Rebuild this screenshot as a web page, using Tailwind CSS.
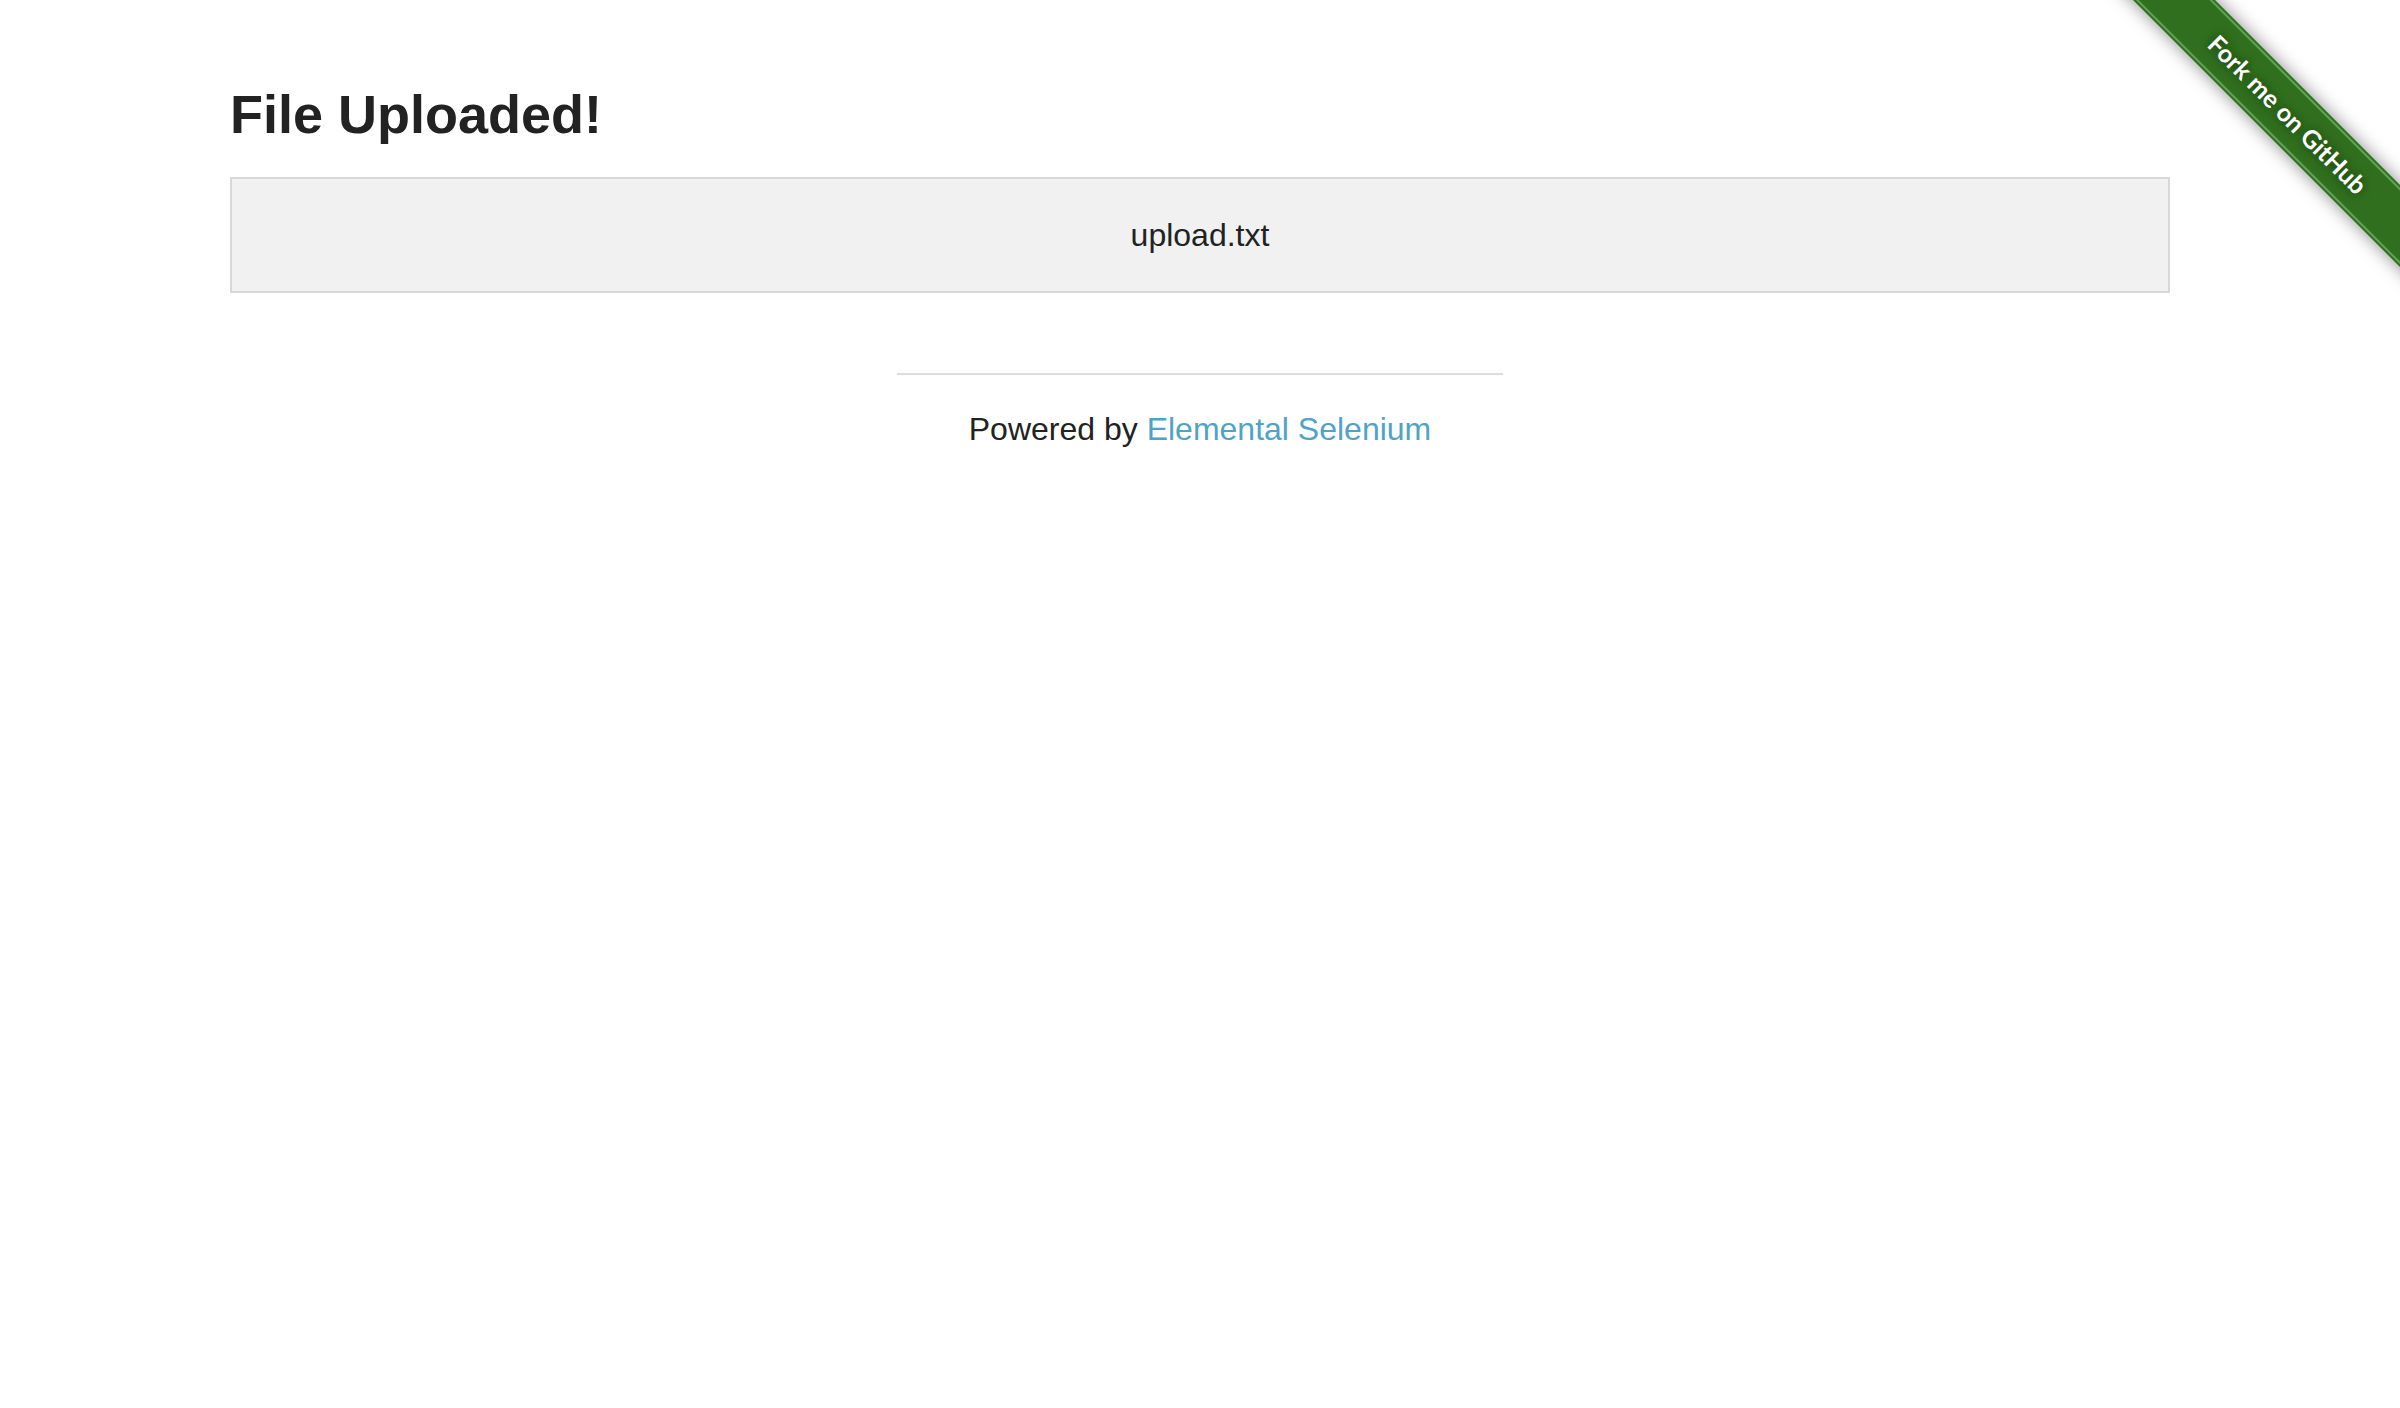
<!DOCTYPE html>
<html lang="en">
<head>
<meta charset="utf-8">
<title>The Internet</title>
<script src="https://cdn.jsdelivr.net/npm/@tailwindcss/browser@4"></script>
</head>
<body class="relative min-h-screen overflow-x-hidden bg-white font-['Liberation_Sans',Arial,sans-serif] text-[32px] leading-[32px] text-[#222222]">
<a href="https://github.com/tourdedave/the-internet" class="absolute top-0 right-0 block size-[300px] overflow-hidden">
  <span class="absolute top-[85px] right-[-138px] flex h-[58px] w-[500px] rotate-45 flex-col justify-center bg-[#2f6f1d] py-[2px] shadow-[0_0_18px_rgba(0,0,0,0.45)]">
    <span class="flex flex-1 items-center justify-center border-y-2 border-[#62a156] font-['Lato','Open_Sans',sans-serif] text-[25px] leading-[32px] font-bold text-white [text-shadow:0_0_8px_rgba(0,0,0,0.5)]">Fork me on GitHub</span>
  </span>
</a>
<main class="mx-auto max-w-[2000px] px-[30px] pt-[76px]">
  <h3 class="text-[54px] leading-[76px] font-bold">File Uploaded!</h3>
  <div class="mt-[25px] border-2 border-[#d8d8d8] bg-[#f1f1f1] p-[40px] text-center">upload.txt</div>
</main>
<footer class="mx-auto mt-[80px] w-full max-w-[2000px] px-[30px]">
  <div class="mx-auto max-w-[606px] border-t-2 border-[#dddddd] pt-[38px] text-center">Powered by <a href="http://elementalselenium.com/" class="text-[#4fa3c7]">Elemental Selenium</a></div>
</footer>
</body>
</html>
